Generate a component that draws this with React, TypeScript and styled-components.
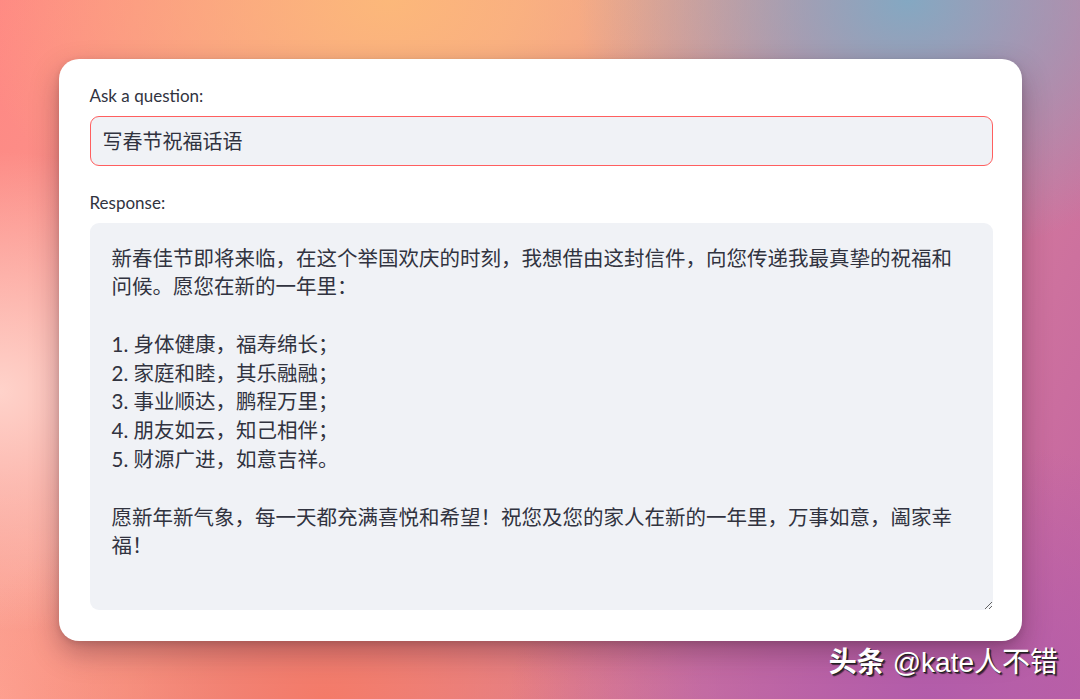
import React from 'react';
import styled, { createGlobalStyle } from 'styled-components';

const RESPONSE = `新春佳节即将来临，在这个举国欢庆的时刻，我想借由这封信件，向您传递我最真挚的祝福和问候。愿您在新的一年里：

1. 身体健康，福寿绵长；
2. 家庭和睦，其乐融融；
3. 事业顺达，鹏程万里；
4. 朋友如云，知己相伴；
5. 财源广进，如意吉祥。

愿新年新气象，每一天都充满喜悦和希望！祝您及您的家人在新的一年里，万事如意，阖家幸福！`;

const App: React.FC = () => {
  return (
    <Page>
      <GlobalStyle />
      <Card>
        <Field>
          <FieldLabel>Ask a question:</FieldLabel>
          <QuestionInput readOnly value="写春节祝福话语" />
        </Field>

        <Field $grow>
          <FieldLabel>Response:</FieldLabel>
          <ResponseArea readOnly defaultValue={RESPONSE} />
        </Field>
      </Card>

      <Watermark>
        <WatermarkBrand>头条</WatermarkBrand> @kate人不错
      </Watermark>
    </Page>
  );
};

const GlobalStyle = createGlobalStyle`
  * {
    box-sizing: border-box;
  }
  html, body {
    margin: 0;
    padding: 0;
  }
  body {
    font-family: 'Lato', 'Noto Sans CJK SC', sans-serif;
    color: #31333f;
  }
`;

const Page = styled.div`
  position: relative;
  width: 1080px;
  height: 699px;
  overflow: hidden;
  display: flex;
  align-items: center;
  justify-content: center;
  background:
    radial-gradient(ellipse 260px 240px at 0% 56%, rgba(255, 214, 206, 0.95), rgba(255, 214, 206, 0) 100%),
    radial-gradient(ellipse 330px 260px at 84% 0%, rgba(132, 168, 194, 1), rgba(132, 168, 194, 0) 100%),
    radial-gradient(ellipse 420px 280px at 36% 0%, rgba(252, 184, 122, 1), rgba(252, 184, 122, 0) 100%),
    radial-gradient(ellipse 420px 260px at 86% 100%, rgba(178, 92, 170, 1), rgba(178, 92, 170, 0) 100%),
    radial-gradient(ellipse 380px 220px at 30% 100%, rgba(244, 122, 104, 1), rgba(244, 122, 104, 0) 100%),
    radial-gradient(ellipse 220px 220px at 0% 100%, rgba(255, 166, 150, 1), rgba(255, 166, 150, 0) 100%),
    linear-gradient(120deg, #ff8784 0%, #f4a08e 35%, #d8809a 65%, #c262a2 100%);
`;

const Card = styled.div`
  width: 963px;
  height: 582px;
  background: #ffffff;
  border-radius: 20px;
  padding: 27px 29px 31px 31px;
  display: flex;
  flex-direction: column;
  gap: 27px;
  box-shadow: 0 12px 28px rgba(60, 20, 40, 0.35), 0 2px 6px rgba(0, 0, 0, 0.12);
`;

const Field = styled.div<{ $grow?: boolean }>`
  display: flex;
  flex-direction: column;
  gap: 10px;
  ${({ $grow }) => ($grow ? 'flex: 1; min-height: 0;' : '')}
`;

const FieldLabel = styled.label`
  font-family: 'Lato', 'Noto Sans CJK SC', sans-serif;
  font-size: 17px;
  line-height: 20px;
  color: #31333f;
`;

const QuestionInput = styled.input`
  width: 100%;
  height: 50px;
  padding: 0 12px;
  border: 1px solid #ff5f5f;
  border-radius: 9px;
  background: #f0f2f6;
  font-family: 'Noto Sans CJK SC', sans-serif;
  font-size: 20px;
  color: #31333f;
  outline: none;
`;

const ResponseArea = styled.textarea`
  flex: 1;
  width: 100%;
  padding: 21px 22px;
  border: none;
  border-radius: 9px;
  background: #f0f2f6;
  font-family: 'Lato', 'Noto Sans CJK SC', sans-serif;
  font-size: 20.5px;
  line-height: 28.8px;
  color: #31333f;
  outline: none;
  resize: vertical;
  overflow: hidden;
`;

const Watermark = styled.div`
  position: absolute;
  right: 22px;
  bottom: 20px;
  font-family: 'Liberation Sans', 'Noto Sans CJK SC', sans-serif;
  font-size: 28px;
  line-height: 32px;
  color: #ffffff;
  text-shadow: 1px 1px 0 #222, 2px 2px 1px rgba(0, 0, 0, 0.6);
`;

const WatermarkBrand = styled.span`
  font-weight: 700;
`;

export default App;
